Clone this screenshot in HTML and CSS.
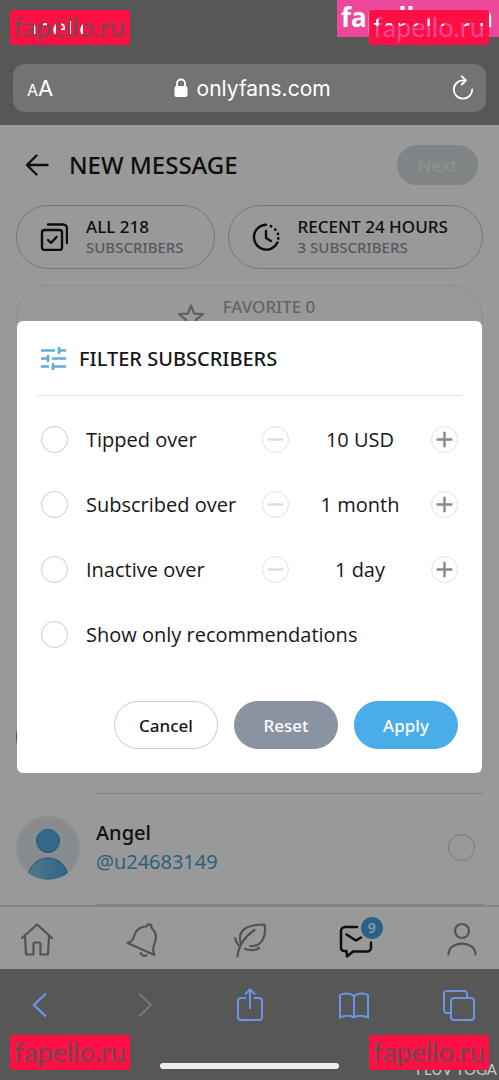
FILE: index.html
```html
<!DOCTYPE html>
<html lang="en">
<head>
    <meta charset="UTF-8">
    <meta name="viewport" content="width=device-width, initial-scale=1.0">
    <title>New message</title>
    <link rel="stylesheet" href="styles.css">
</head>
<body>
    <!-- Browser top bar -->
    <header class="browser-top">
        <div class="address-bar">
            <button class="text-size" type="button" aria-label="Text size"><span class="small-a">A</span>A</button>
            <a class="address" href="#">
                <svg width="14" height="20" viewBox="0 0 14 20" fill="none" aria-hidden="true">
                    <rect x="0.5" y="8" width="13" height="11" rx="2" fill="#fff"/>
                    <path d="M3 9V5.500a4 4 0 0 1 8 0V9" stroke="#fff" stroke-width="1.800"/>
                </svg>
                onlyfans.com
            </a>
            <button class="reload" type="button" aria-label="Reload">
                <svg width="24" height="26" viewBox="0 0 24 26" fill="none" stroke="#fff" stroke-width="1.800" stroke-linecap="round" stroke-linejoin="round">
                    <path d="M14.500 5.300H12a9.200 9.200 0 1 0 9.200 9.200"/>
                    <path d="M10.800 1.300l4.200 4-4.200 4.200"/>
                </svg>
            </button>
        </div>
    </header>

    <main class="page">
        <div class="page-header">
            <a class="back" href="#" aria-label="Back">
                <svg width="24" height="24" viewBox="0 0 24 24" fill="none" stroke="#1c1c1c" stroke-width="2.400" stroke-linecap="round" stroke-linejoin="round">
                    <path d="M22.500 12H2.500M11.500 2.500L2 12l9.500 9.500"/>
                </svg>
            </a>
            <h1>NEW MESSAGE</h1>
            <button class="next" type="button" disabled>Next</button>
        </div>

        <div class="groups">
            <button class="group" type="button">
                <svg width="28" height="28" viewBox="0 0 28 28" fill="none" stroke="#161616" stroke-width="2.400" stroke-linecap="round" stroke-linejoin="round">
                    <rect x="2" y="7" width="20" height="20" rx="2.500"/>
                    <path d="M8 1.500h15a4 4 0 0 1 4 4V20"/>
                    <path d="M8 17l3 3 5.500-6"/>
                </svg>
                <span class="group-text">ALL 218<small>SUBSCRIBERS</small></span>
            </button>
            <button class="group group-recent" type="button">
                <svg width="28" height="28" viewBox="0 0 28 28" fill="none" stroke="#161616" stroke-width="2.400" stroke-linecap="round" stroke-linejoin="round">
                    <path d="M14 1.800a12.400 12.400 0 1 0 11.500 17.800"/>
                    <path d="M14 8v7l5 3"/>
                    <path d="M19 3.200v.1M23.300 6.600v.1M26 11v.1M26.300 15.500v.1" stroke-width="2.800"/>
                </svg>
                <span class="group-text">RECENT 24 HOURS<small>3 SUBSCRIBERS</small></span>
            </button>
            <button class="group group-favorite" type="button" disabled>
                <svg width="28" height="28" viewBox="0 0 28 28" fill="none" stroke="#a0a0a0" stroke-width="2.200" stroke-linejoin="round">
                    <path d="M14 2.500l3.100 8.200 9 .5-7 5.500 2.500 8.500L14 20.300l-7.600 4.900 2.500-8.500-7-5.500 9-.5z"/>
                </svg>
                <span class="group-text">FAVORITE 0</span>
            </button>
        </div>

        <div class="subscribers">
            <div class="subscriber">
                <div class="avatar avatar-dark"></div>
                <div class="subscriber-info"></div>
            </div>
            <div class="subscriber">
                <svg class="avatar" viewBox="0 0 64 64" aria-hidden="true">
                    <defs>
                        <clipPath id="round"><circle cx="32" cy="32" r="32"/></clipPath>
                        <linearGradient id="skin" x1="0" y1="0" x2="1" y2="0">
                            <stop offset="0" stop-color="#8ac6e6"/>
                            <stop offset="1" stop-color="#4ba9de"/>
                        </linearGradient>
                    </defs>
                    <g clip-path="url(#round)">
                        <rect width="64" height="64" fill="#e3eaee"/>
                        <circle cx="32" cy="25" r="11.500" fill="#56ade0" stroke="#2b93cf"/>
                        <circle cx="32" cy="62" r="20" fill="url(#skin)" stroke="#2b93cf"/>
                    </g>
                </svg>
                <div class="subscriber-info">
                    <label class="name" for="angel">Angel</label>
                    <a class="handle" href="#">@u24683149</a>
                    <input class="radio" type="checkbox" id="angel">
                </div>
            </div>
        </div>

        <nav class="site-nav">
            <a href="#" aria-label="Home">
                <svg width="34" height="36" viewBox="0 0 34 36">
                    <path d="M2 16L17 2.500l15 13.500M5 14l1 18.500h7.500V22a1.500 1.500 0 0 1 1.500-1.500h4a1.500 1.500 0 0 1 1.500 1.500v10.500H28L29 14"/>
                </svg>
            </a>
            <a href="#" aria-label="Notifications">
                <svg width="34" height="36" viewBox="0 0 34 36">
                    <path d="M1.500 21c4-1 6-4 7-8 2-6 6-8.500 12-8.500 1-3.500 5.500-2.500 5 1.500 4.500 3.500 5.500 8 3.500 14-1.500 5-3 8-.5 13z"/>
                    <path d="M14.500 31c1 3 4.500 3.500 6 2"/>
                </svg>
            </a>
            <a href="#" aria-label="Feed">
                <svg width="34" height="36" viewBox="0 0 34 36">
                    <path d="M8 22C3.500 8 14 2.500 31.500 2.500 34 15 28 25 17 24"/>
                    <path d="M21.500 8C13 14 5.500 22 4.500 34.500M2 16c1 4 2.500 6.500 5 9M12 27c5 1.500 10 2 14-1"/>
                </svg>
            </a>
            <a class="active" href="#" aria-label="Messages">
                <svg width="34" height="36" viewBox="0 0 34 36">
                    <path d="M18 5H6a4 4 0 0 0-4 4v17a3 3 0 0 0 3 3h2.500l.5 5.500 6-5h14a4 4 0 0 0 4-4v-5"/>
                    <path d="M7.500 12.500l9.500 6 5-3"/>
                </svg>
                <span class="badge">9</span>
            </a>
            <a href="#" aria-label="Profile">
                <svg width="34" height="36" viewBox="0 0 34 36">
                    <circle cx="17" cy="9" r="7"/>
                    <path d="M3.500 32.500c0-14.500 27-14.500 27 0"/>
                </svg>
            </a>
        </nav>

        <!-- Filter dialog -->
        <div class="overlay">
            <form class="modal" role="dialog" aria-labelledby="modal-title">
                <div class="modal-header">
                    <svg width="25" height="25" viewBox="0 0 25 25" fill="none" stroke="#5fabdb" stroke-width="2.600" aria-hidden="true">
                        <path d="M0 4.500h14M18 4.500h7M18 1v7M0 12.500h7M11 12.500h14M7 9v7M0 20.500h8M12 20.500h13M12 17v7"/>
                    </svg>
                    <h2 id="modal-title">FILTER SUBSCRIBERS</h2>
                </div>
                <div class="modal-body">
                    <div class="filter">
                        <input class="radio" type="radio" name="filter" id="tipped">
                        <label for="tipped">Tipped over</label>
                        <div class="stepper">
                            <button class="step" type="button" aria-label="Less" disabled><svg viewBox="0 0 27 27"><path d="M5 13.500h17"/></svg></button>
                            <output>10 USD</output>
                            <button class="step" type="button" aria-label="More"><svg viewBox="0 0 27 27"><path d="M5 13.500h17M13.500 5v17"/></svg></button>
                        </div>
                    </div>
                    <div class="filter">
                        <input class="radio" type="radio" name="filter" id="subscribed">
                        <label for="subscribed">Subscribed over</label>
                        <div class="stepper">
                            <button class="step" type="button" aria-label="Less" disabled><svg viewBox="0 0 27 27"><path d="M5 13.500h17"/></svg></button>
                            <output>1 month</output>
                            <button class="step" type="button" aria-label="More"><svg viewBox="0 0 27 27"><path d="M5 13.500h17M13.500 5v17"/></svg></button>
                        </div>
                    </div>
                    <div class="filter">
                        <input class="radio" type="radio" name="filter" id="inactive">
                        <label for="inactive">Inactive over</label>
                        <div class="stepper">
                            <button class="step" type="button" aria-label="Less" disabled><svg viewBox="0 0 27 27"><path d="M5 13.500h17"/></svg></button>
                            <output>1 day</output>
                            <button class="step" type="button" aria-label="More"><svg viewBox="0 0 27 27"><path d="M5 13.500h17M13.500 5v17"/></svg></button>
                        </div>
                    </div>
                    <div class="filter">
                        <input class="radio" type="radio" name="filter" id="recommended">
                        <label for="recommended">Show only recommendations</label>
                    </div>
                </div>
                <div class="modal-actions">
                    <button class="btn" type="button">Cancel</button>
                    <button class="btn btn-gray" type="reset">Reset</button>
                    <button class="btn btn-blue" type="submit">Apply</button>
                </div>
            </form>
        </div>
    </main>

    <!-- Browser bottom bar -->
    <footer class="browser-bottom">
        <div class="toolbar">
            <button type="button" aria-label="Back">
                <svg width="34" height="34" viewBox="0 0 34 34"><path d="M23 5.500L11 17l12 11.500" stroke-width="2.400"/></svg>
            </button>
            <button class="off" type="button" aria-label="Forward" disabled>
                <svg width="34" height="34" viewBox="0 0 34 34"><path d="M11 5.500L23 17 11 28.500"/></svg>
            </button>
            <button type="button" aria-label="Share">
                <svg width="34" height="34" viewBox="0 0 34 34"><path d="M13 10H8a3 3 0 0 0-3 3v16a3 3 0 0 0 3 3h18a3 3 0 0 0 3-3V13a3 3 0 0 0-3-3h-5M17 21V2M12 6.500L17 1.500l5 5"/></svg>
            </button>
            <button type="button" aria-label="Bookmarks">
                <svg width="34" height="34" viewBox="0 0 34 34"><path d="M17 8v21M17 8C14 5 7 4.500 3 7v22.500c4-2.500 11-2.500 14 0 3-2.500 10-2.500 14 0V7c-4-2.500-11-2-14 1z"/></svg>
            </button>
            <button type="button" aria-label="Tabs">
                <svg width="34" height="34" viewBox="0 0 34 34"><rect x="9" y="10" width="23" height="22" rx="3"/><path d="M9 25H5a3 3 0 0 1-3-3V6a3 3 0 0 1 3-3h17a3 3 0 0 1 3 3v4"/></svg>
            </button>
        </div>
        <div class="home-bar"></div>
    </footer>

    <!-- Stamps over the corners -->
    <div class="banner">fapello.com</div>
    <div class="credit">I LUV YOGA</div>
    <div class="stamp stamp-top stamp-left"><span class="cut-clock">fapello.ru</span></div>
    <div class="stamp stamp-top stamp-right"><span class="cut-banner">fapello.ru</span></div>
    <div class="stamp stamp-bottom stamp-left"><span>fapello.ru</span></div>
    <div class="stamp stamp-bottom stamp-right"><span>fapello.ru</span></div>
</body>
</html>
```

FILE: styles.css
```css
* {
    box-sizing: border-box;
}

body {
    position: relative;
    display: flex;
    flex-direction: column;
    min-height: 100vh;
    margin: 0;
    overflow-x: hidden;
    background: #575757;
    color: #16181a;
    font-family: "Open Sans", "Noto Sans", sans-serif;
}

h1, h2 {
    margin: 0;
    font-family: "Noto Sans", "Open Sans", sans-serif;
    font-weight: 500;
}

button {
    padding: 0;
    border: 0;
    background: none;
    color: inherit;
    font-family: inherit;
}

a {
    color: inherit;
    text-decoration: none;
}

svg {
    display: block;
    flex-shrink: 0;
}

/* Browser top bar */
.browser-top {
    padding: 64px 13px 13px;
}

.address-bar {
    display: flex;
    align-items: center;
    justify-content: space-between;
    height: 48px;
    padding: 0 11px 0 14px;
    border-radius: 12px;
    background: #737373;
    color: #fff;
    font-family: Inter, "Liberation Sans", sans-serif;
}

.text-size {
    font-size: 22px;
}

.small-a {
    font-size: 16px;
}

.address {
    display: flex;
    align-items: center;
    gap: 9px;
    font-size: 21px;
}

/* Page under the dialog */
.page {
    position: relative;
    display: flex;
    flex: 1;
    flex-direction: column;
    background: #fff;
}

.page-header {
    display: flex;
    align-items: center;
    gap: 20px;
    height: 80px;
    padding: 0 21px 0 25px;
}

.page-header h1 {
    flex: 1;
    font-size: 24px;
    line-height: 1;
}

.next {
    width: 81px;
    height: 40px;
    border-radius: 20px;
    background: #d5dde0;
    color: #f2f2f2;
    font-size: 18px;
}

.groups {
    display: flex;
    flex-wrap: wrap;
    gap: 16px 13px;
    padding: 0 16px;
}

.group {
    display: flex;
    align-items: center;
    gap: 18px;
    height: 64px;
    padding: 0 30px 0 23px;
    border: 1px solid #bccdd4;
    border-radius: 32px;
    text-align: left;
}

.group-recent {
    flex: 1;
}

.group-favorite {
    flex-basis: 100%;
    justify-content: center;
    border-color: #ececec;
    color: #a8a8a8;
}

.group-text {
    min-height: 42px;
    font-family: "Noto Sans", "Open Sans", sans-serif;
    font-size: 17px;
    font-weight: 500;
    line-height: 21px;
    white-space: nowrap;
}

.group-text small {
    display: block;
    color: #8a96a3;
    font-size: 15px;
}

.subscribers {
    display: flex;
    flex: 1;
    flex-direction: column;
    justify-content: flex-end;
    padding: 0 16px;
}

.subscriber {
    display: flex;
    align-items: center;
    gap: 16px;
    height: 111px;
}

.avatar {
    width: 64px;
    height: 64px;
    margin-bottom: 4px;
    border-radius: 50%;
}

.avatar-dark {
    background: #777;
}

.subscriber-info {
    display: grid;
    flex: 1;
    grid-template-columns: 1fr auto;
    align-content: center;
    align-items: center;
    height: 100%;
    padding: 0 8px 4px 0;
    border-bottom: 1px solid #d4dade;
    line-height: 29px;
}

.name {
    font-family: "Noto Sans", "Open Sans", sans-serif;
    font-size: 20px;
    font-weight: 500;
}

.handle {
    grid-row: 2;
    color: #409fd5;
    font-size: 20px;
}

.subscriber-info .radio {
    grid-column: 2;
    grid-row: 1 / 3;
}

.site-nav {
    display: flex;
    align-items: center;
    justify-content: space-between;
    height: 64px;
    padding: 4px 20px 0;
    border-top: 2px solid #d9dfe2;
}

.site-nav a {
    position: relative;
}

.site-nav svg {
    fill: none;
    stroke: #858c93;
    stroke-width: 2.2px;
    stroke-linecap: round;
    stroke-linejoin: round;
}

.site-nav .active svg {
    stroke: #16181a;
    stroke-width: 2.5px;
}

.badge {
    position: absolute;
    top: -5px;
    right: -10px;
    width: 22px;
    height: 22px;
    border-radius: 50%;
    background: #48a6df;
    color: #fff;
    font-size: 14px;
    font-weight: 600;
    line-height: 22px;
    text-align: center;
}

/* Filter dialog */
.overlay {
    position: absolute;
    inset: 0;
    display: flex;
    align-items: center;
    padding: 0 17px;
    background: rgba(0, 0, 0, 0.4);
}

.modal {
    flex: 1;
    border-radius: 6px;
    background: #fff;
}

.modal-header {
    display: flex;
    align-items: center;
    gap: 13px;
    height: 75px;
    margin: 0 20px;
    padding: 0 4px;
    border-bottom: 1px solid #e2e4e6;
}

.modal-header h2 {
    font-size: 20px;
}

.modal-body {
    padding: 11px 24px 34px;
    font-size: 20px;
}

.filter {
    display: flex;
    align-items: center;
    gap: 18px;
    height: 65px;
}

.filter label {
    flex: 1;
    white-space: nowrap;
}

.radio {
    width: 27px;
    height: 27px;
    margin: 0;
    border: 1px solid #c4cbd0;
    border-radius: 50%;
    appearance: none;
}

.radio:checked {
    border: 8px solid #45a8e4;
}

.stepper {
    display: flex;
    align-items: center;
    width: 196px;
}

.stepper output {
    flex: 1;
    text-align: center;
}

.step {
    width: 27px;
    height: 27px;
    border: 1px solid #dfe2e4;
    border-radius: 50%;
}

.step svg {
    width: 25px;
    height: 25px;
    stroke: #85888e;
    stroke-width: 2.6px;
}

.step:disabled svg {
    stroke: #dcdfe1;
}

.modal-actions {
    display: flex;
    justify-content: flex-end;
    gap: 16px;
    padding: 0 24px 24px;
}

.btn {
    width: 104px;
    height: 48px;
    border: 1px solid #c4cbd0;
    border-radius: 24px;
    font-family: "Noto Sans", "Open Sans", sans-serif;
    font-size: 17px;
    font-weight: 500;
}

.btn-gray {
    border-color: #8a93a2;
    background: #8a93a2;
    color: #fff;
}

.btn-blue {
    border-color: #4aace8;
    background: #4aace8;
    color: #fff;
}

/* Browser bottom bar */
.browser-bottom {
    display: flex;
    flex-direction: column;
    align-items: center;
    justify-content: space-between;
    height: 111px;
    padding: 19px 23px 11px;
}

.toolbar {
    display: flex;
    justify-content: space-between;
    width: 100%;
}

.toolbar svg {
    fill: none;
    stroke: #6a95e6;
    stroke-width: 2px;
}

.toolbar .off svg {
    stroke: #777;
}

.home-bar {
    width: 179px;
    height: 6px;
    border-radius: 3px;
    background: #eee;
}

/* Stamps */
.banner {
    position: absolute;
    top: 0;
    right: 0;
    width: 162px;
    height: 37px;
    padding-left: 4px;
    background: #ec4899;
    color: #fff;
    font-size: 26px;
    font-weight: 700;
    line-height: 34px;
}

.credit {
    position: absolute;
    right: 2px;
    bottom: 2px;
    color: #c8c8c8;
    font-family: Lato, sans-serif;
    font-size: 15px;
}

.stamp {
    position: absolute;
    width: 120px;
    height: 35px;
    border-radius: 3px;
    background: #ff1044;
    color: #6b4a51;
    font-family: Lato, sans-serif;
    font-size: 27px;
    line-height: 33px;
    text-align: center;
}

.stamp-top {
    top: 10px;
}

.stamp-bottom {
    bottom: 10px;
}

.stamp-left {
    left: 10px;
}

.stamp-right {
    right: 10px;
}

.cut-clock {
    background: repeating-linear-gradient(90deg, #fff 0 4px, #6b4a51 4px 9px) 20px 11px / 52px 13px no-repeat, #6b4a51;
    background-clip: text;
    color: transparent;
}

.cut-banner {
    background: repeating-linear-gradient(90deg, #fff 0 6px, #ec4899 6px 13px) 0 9px / 100% 7px no-repeat, #ec4899;
    background-clip: text;
    color: transparent;
}
```
